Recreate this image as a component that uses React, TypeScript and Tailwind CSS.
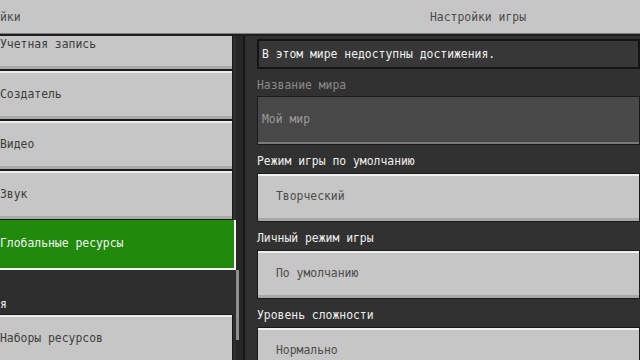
const font = { fontFamily: '"DejaVu Sans Mono", "Liberation Mono", monospace' };

const SideButton = ({ label }: { label: string }) => (
  <div className="h-[50px] shrink-0 border-y border-r border-[#1a1a1a] bg-[#c6c6c6] flex flex-col">
    <div className="h-[2px] bg-[#ececec]" />
    <div className="flex-1 flex items-center text-[#3c3c3c]">{label}</div>
    <div className="h-[3px] bg-[#a9a9a9]" />
  </div>
);

const Field = ({ label, value }: { label: string; value: string }) => (
  <>
    <div className="h-[28px] shrink-0 pt-[10px] leading-[12px] text-[#efefef]">{label}</div>
    <div className="h-[49px] shrink-0 border border-[#1a1a1a] bg-[#c6c6c6] flex flex-col">
      <div className="h-[2px] bg-[#efefef]" />
      <div className="flex-1 flex items-center pl-[18px] text-[#4c4c4c]">{value}</div>
      <div className="h-[3px] bg-[#a8a8a8]" />
    </div>
  </>
);

export default function App() {
  return (
    <div className="w-[640px] h-[360px] overflow-hidden bg-[#313131] flex flex-col text-[11.4px]" style={font}>
      <div className="h-[36px] shrink-0 flex flex-col">
        <div className="h-[33px] bg-[#c6c6c6] flex items-center pt-[3px] text-[#4a4a4a]">
          <div className="w-[245px]">йки</div>
          <div className="pl-[185px]">Настройки игры</div>
        </div>
        <div className="h-[1px] bg-[#7e7e7e]" />
        <div className="h-[2px] bg-[#1e1e1e]" />
      </div>

      <div className="flex-1 flex min-h-0">
        <div className="w-[236px] shrink-0 overflow-hidden bg-[#2e2e2e]">
          <div className="-mt-[16px] flex flex-col">
            <div className="mr-[3px] flex flex-col">
              <SideButton label="Учетная запись" />
              <SideButton label="Создатель" />
              <SideButton label="Видео" />
              <SideButton label="Звук" />
            </div>
            <div className="h-[50px] shrink-0 bg-[#218a0c] border-r-[2px] border-b-[2px] border-[#f2f2f2] flex items-center text-[#f4f4f4]">
              Глобальные ресурсы
            </div>
            <div className="h-[44px] shrink-0 mr-[3px] flex items-end pb-[1px] text-[#f4f4f4]">я</div>
            <div className="mr-[3px] flex flex-col">
              <SideButton label="Наборы ресурсов" />
            </div>
          </div>
        </div>

        <div className="w-[7px] shrink-0 bg-[#272727] flex flex-col">
          <div className="h-[234px] shrink-0" />
          <div className="h-[70px] w-[3px] shrink-0 bg-[#8f8f8f]" />
        </div>
        <div className="w-[2px] shrink-0 bg-[#161616]" />

        <div className="flex-1 pl-[12px] flex flex-col overflow-hidden">
          <div className="mt-[3px] h-[30px] shrink-0 border-2 border-[#141414] bg-[#373737] flex items-center pl-[3px] pt-[2px] text-[#f2f2f2]">
            В этом мире недоступны достижения.
          </div>
          <div className="h-[27px] shrink-0 pt-[10px] leading-[12px] text-[#8b8b8b]">Название мира</div>
          <div className="h-[49px] shrink-0 border border-[#1a1a1a] bg-[#484848] flex flex-col">
            <div className="flex-1 flex items-center pl-[4px] text-[#9c9c9c]">Мой мир</div>
            <div className="h-[2px] bg-[#7a7a7a]" />
          </div>
          <Field label="Режим игры по умолчанию" value="Творческий" />
          <Field label="Личный режим игры" value="По умолчанию" />
          <Field label="Уровень сложности" value="Нормально" />
        </div>
      </div>
    </div>
  );
}
